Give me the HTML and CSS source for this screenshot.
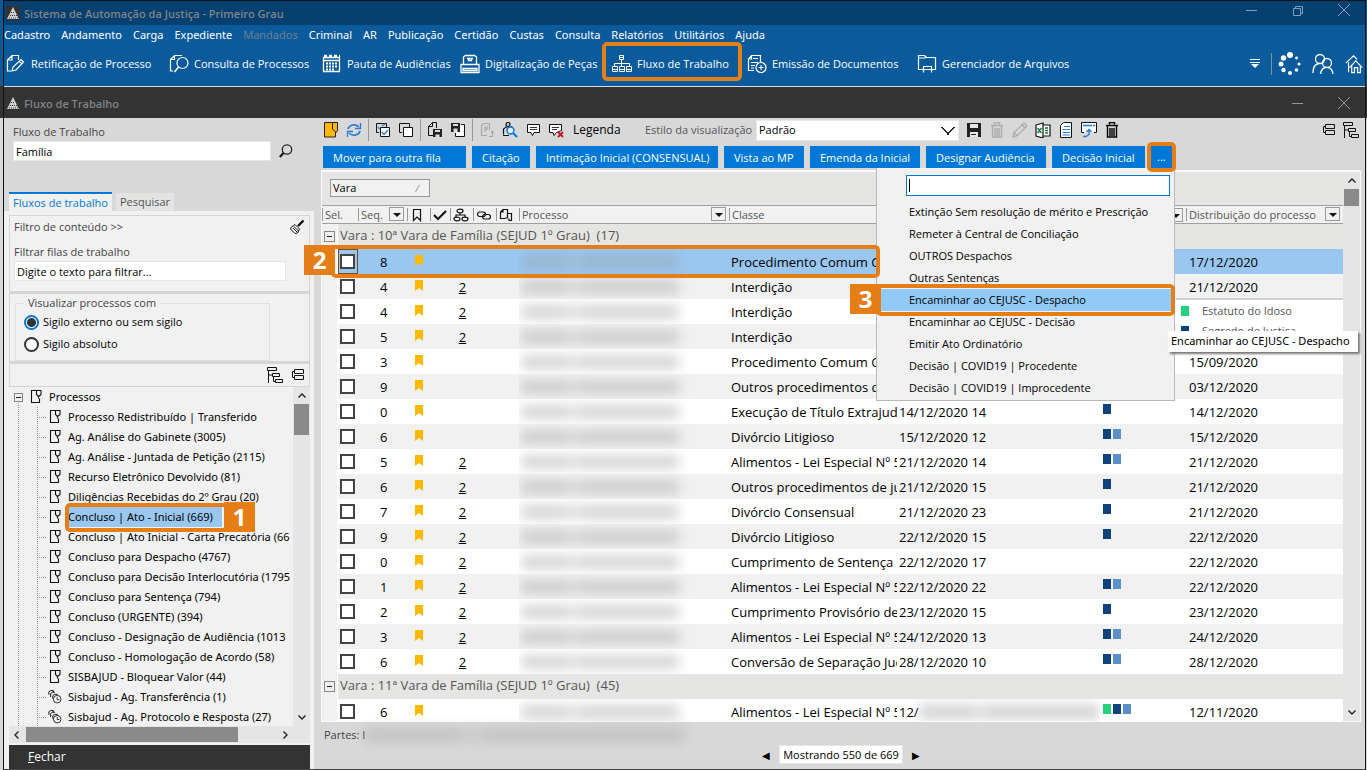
FILE: index.html
```html
<!DOCTYPE html>
<html lang="pt-BR">
<head>
<meta charset="utf-8">
<title>Sistema de Automação da Justiça - Primeiro Grau</title>
<link rel="stylesheet" href="styles.css">
</head>
<body>
<svg class="defs" aria-hidden="true">
  <symbol id="logo" viewBox="0 0 14 14"><path d="M0 0h14v14H0z" fill="#333"/><path d="M7 1 13 13H1z" fill="#d0d0d0"/><path d="M5 6.500h4M4 9.500h7M3 12h9" stroke="#333" stroke-width="1" stroke-dasharray="1 1" fill="none"/></symbol>
  <symbol id="min" viewBox="0 0 14 14"><path d="M1 7.5h11" stroke="currentColor" fill="none"/></symbol>
  <symbol id="max" viewBox="0 0 14 14"><path d="M2.5 5.5h7v7h-7zM4.500 5V3.500h7v7H10" stroke="currentColor" fill="none"/></symbol>
  <symbol id="close" viewBox="0 0 14 14"><path d="m1 1 12 12M13 1 1 13" stroke="currentColor" fill="none"/></symbol>
  <symbol id="docpen" viewBox="0 0 20 20"><path d="M5 17H1.500V6L6 1.500h6.500V6M6 1.500V6H1.500M6 17l1-4 8-7.500 2.500 2.500L10 16zM13 7l3 3" stroke="currentColor" fill="none" stroke-width="1.200"/></symbol>
  <symbol id="docfind" viewBox="0 0 20 20"><path d="M4 17H1.500V5.500l4-4H13M5.500 1.500v4h-4" stroke="currentColor" fill="none" stroke-width="1.200"/><circle cx="13.500" cy="9" r="5.500" stroke="currentColor" fill="none" stroke-width="1.200"/><path d="m9.500 13-4 5" stroke="currentColor" stroke-width="1.500"/></symbol>
  <symbol id="calendar" viewBox="0 0 20 20"><path d="M1.500 3.500h16v14h-16zM1 6.500h17" stroke="currentColor" fill="none" stroke-width="1.300"/><path d="M2 2h16" stroke="currentColor" stroke-width="2.500" stroke-dasharray="3 2"/><path d="M4 9.500h11M4 12.500h11M4 15.500h8" stroke="currentColor" stroke-width="2" stroke-dasharray="2 1"/></symbol>
  <symbol id="scanner" viewBox="0 0 20 20"><path d="M3.500 10V3l2-1.500h9l2 1.500v7M1 10.500h18v8H1zM3 14.500h14v2H3zM7 4.500h6M8.500 4.500v2h3v-2" stroke="currentColor" fill="none" stroke-width="1.300"/></symbol>
  <symbol id="flow" viewBox="0 0 20 20"><path d="M7.500 1.500h4v4h-4zM9.500 6v7M2.500 12V9.500h15V12M.5 12.500h5v5h-5zM7.500 12.500h5v5h-5zM14.500 12.500h5v5h-5zM0 15.500h6M7 15.500h6M14 15.500h6M7 3.500h5" stroke="currentColor" fill="none"/></symbol>
  <symbol id="docadd" viewBox="0 0 20 20"><path d="M7 16.500H1.500V5l3-3.500h9V8M4.500 1.500V5h-3M4 8.500h7M4 11.500h4M4 14h3M6 4.500h5" stroke="currentColor" fill="none" stroke-width="1.200"/><circle cx="14" cy="13.500" r="5" stroke="currentColor" fill="none" stroke-width="1.200"/><path d="M11.500 13.500h5M14 11v5" stroke="currentColor"/></symbol>
  <symbol id="folderdoc" viewBox="0 0 20 20"><path d="M6 15.500H1.500v-14h6l2 2h9v12H15M1.500 4h6l2-.5M6.500 18.500v-6h8v6M6.500 15.500h8" stroke="currentColor" fill="none" stroke-width="1.200"/></symbol>
  <symbol id="more" viewBox="0 0 12 12"><path d="M1 1.500h10M1 4.500h10" stroke="currentColor"/><path d="M2 6h8L6 10z" fill="currentColor"/></symbol>
  <symbol id="spinner" viewBox="0 0 24 24"><g fill="currentColor"><circle cx="12" cy="3" r="3"/><circle cx="5.500" cy="6" r="2.700"/><circle cx="3" cy="12" r="2.500"/><circle cx="5.500" cy="18" r="2.200"/><circle cx="12" cy="21" r="2"/><circle cx="18.500" cy="18" r="1.800"/><circle cx="21" cy="12" r="1.600"/><circle cx="18.500" cy="6" r="1.400"/></g></symbol>
  <symbol id="users" viewBox="0 0 22 22"><g stroke="currentColor" fill="none" stroke-width="1.300"><circle cx="8" cy="6" r="4.500"/><circle cx="15" cy="10" r="4.500"/><path d="M1 20c0-6 2-9 6-9.500M8.500 21c.5-4 2.500-6 5-6.500M16 14.500c3 .5 4.500 3 5 6.500"/></g></symbol>
  <symbol id="home" viewBox="0 0 20 22"><path d="M1 10 9.500 2l4 4M4 9v11M5 15l7-7.500L19 15M7.500 13v7.500h3V15h3.500v5.500h3V13" stroke="currentColor" fill="none" stroke-width="1.300"/></symbol>
  <symbol id="search" viewBox="0 0 16 16"><circle cx="9" cy="6.500" r="4.700" stroke="#222" fill="none" stroke-width="1.300"/><path d="m5.500 10-3.700 4" stroke="#111" stroke-width="2"/></symbol>
  <symbol id="broom" viewBox="0 0 16 16"><path d="m9 7 5.500-5.500" stroke="#111" stroke-width="2.400"/><path d="M6 5.500 10.500 10l-2 4-2.500.5L1.500 10 2 8.500zM4 9l4 4M5 7.500l4.500 4.500" fill="#fff" stroke="#111"/></symbol>
  <symbol id="tree" viewBox="0 0 16 16"><path d="M.5 .5h9v3h-9zM5.500 6.500h7v3h-7zM8.500 12.500h7v3h-7zM1.500 4v12M6.500 10v4.500H8M1.500 8H5" stroke="#111" fill="none"/></symbol>
  <symbol id="boxes" viewBox="0 0 14 14"><path d="M3.500 1.500h9v4h-9zM3.500 7.500h9v4h-9zM3 3.500H1.500v6H3" stroke="#111" fill="none"/></symbol>
  <symbol id="queue" viewBox="0 0 12 14"><path d="M6.500 .5h-5v12h8v-4M6.500 .5h4.500v4l-2.500 2v2M6.500 .5v4l2 2" stroke="#111" fill="none" stroke-width="1.100"/></symbol>
  <symbol id="queues" viewBox="0 0 16 16"><path d="M1 5.500V2l2-1.500h3V3M3 8V4l2-1.500h3M5.500 10V6.500l2-1.500H11" stroke="#111" fill="none" stroke-width="1.100"/><circle cx="10.500" cy="10.500" r="4.300" fill="#fff" stroke="#111"/><path d="M10.500 8v3H13" stroke="#111" fill="none"/></symbol>
  <symbol id="folder" viewBox="0 0 16 16"><path d="M1.500 .5h13v8.500l-2 2v4h-11z" fill="#ffb900" stroke="#222"/><path d="M9.500 1v6l3 3V15" stroke="#222" fill="none"/></symbol>
  <symbol id="refresh" viewBox="0 0 16 16"><path d="M2 7c1-4 7-6 11-2M14 9c-1 4-7 6-11 2" stroke="#2b7cd3" fill="none" stroke-width="1.700"/><path d="M14.500 1v5.500H9M1.500 15V9.500H7" stroke="#2b7cd3" fill="none" stroke-width="1.300"/></symbol>
  <symbol id="checkall" viewBox="0 0 16 16"><path d="M4 10.500H1.500v-9h10V5" stroke="#111" fill="none"/><path d="M5.500 5.500h9v9h-9z" fill="#fff" stroke="#111"/><path d="m7 10 2 2.500L13 8M3 5l1.500 2M7 4l3-2" stroke="#2b7cd3" fill="none" stroke-width="1.300"/></symbol>
  <symbol id="uncheck" viewBox="0 0 16 16"><path d="M4 10.500H1.500v-9h10V5" stroke="#111" fill="none"/><path d="M5.500 5.500h9v9h-9z" fill="#fff" stroke="#111"/></symbol>
  <symbol id="docsave" viewBox="0 0 16 16"><path d="M6 13.500H1.500v-9l4-4h4V6M5.500 .5v4h-4" stroke="#111" fill="none"/><path d="M6 7h9v8H6z" fill="#222"/><path d="M8 8h5v2H8zM8.500 12.500h4V15h-4z" fill="#ddd"/></symbol>
  <symbol id="savedoc" viewBox="0 0 16 16"><path d="M11 2.500h3.500v12h-9V11" stroke="#111" fill="#fff"/><path d="M1 1h9v9H1z" fill="#222"/><path d="M3 2h5v2H3zM3.500 6.500h4V10h-4z" fill="#ddd"/></symbol>
  <symbol id="docp" viewBox="0 0 16 16"><path d="M8 13.500H2.500v-10l2-2h6V8M10 14.500h3.500v-5M12 11l1.500-2 1.500 2M6 10V5h2v2.500H6" stroke="#aaa" fill="none" stroke-width="1.200"/></symbol>
  <symbol id="stampfind" viewBox="0 0 16 16"><path d="M1.500 12.500V7L4 5h6l1 2" stroke="#111" fill="none" stroke-width="1.200"/><circle cx="6" cy="2.500" r="2" stroke="#111" fill="none" stroke-width="1.200"/><path d="M1 13.500h6" stroke="#111"/><circle cx="8.500" cy="8.500" r="3.500" fill="#e5effa" stroke="#0078d7" stroke-width="1.400"/><path d="m11 11 4 4" stroke="#0078d7" stroke-width="2"/></symbol>
  <symbol id="comment" viewBox="0 0 16 16"><path d="M2.500 2.500h12v8H9L7.500 13.500 6 10.500H2.500z" stroke="#111" fill="#fff"/><path d="M5 5.500h7M5 7.500h7" stroke="#333"/></symbol>
  <symbol id="commentx" viewBox="0 0 16 16"><path d="M1.500 2.500h12v6l-5 2L6 13.500 5 10.500H1.500z" stroke="#111" fill="#fff"/><path d="M4 5.500h7M4 7.500h5" stroke="#333"/><path d="m10 10 5 5M15 10l-5 5" stroke="#c4151c" stroke-width="1.800"/></symbol>
  <symbol id="save" viewBox="0 0 16 16"><path d="M1 1h14v14H1z" fill="#222"/><path d="M4 2h8v4H4zM4 10h8v5H4z" fill="#e5e5e5"/><path d="M5 12.500h5" stroke="#222"/></symbol>
  <symbol id="bin" viewBox="0 0 16 16"><path d="M5.500 2.500v-2h5v2M2 3.500h12M3.500 4v11h9V4M6 6v8M8 6v8M10 6v8" stroke="currentColor" fill="none" stroke-width="1.400"/></symbol>
  <symbol id="pencil" viewBox="0 0 16 16"><path d="m1 15 1-4.500L12 1l3 3-9.500 9.500zM10 3l3 3M2 10.500 5.500 14" stroke="#aaa" fill="none" stroke-width="1.200"/></symbol>
  <symbol id="excel" viewBox="0 0 16 16"><path d="M8 3h7v11H8" fill="#fff" stroke="#111" stroke-width="1.200"/><path d="m1 3 7-2v15l-7-2z" fill="#fff" stroke="#111" stroke-width="1.200"/><path d="m2.500 6 4 5M6.500 6l-4 5M10 6h3M10 8.500h3M10 11h3" stroke="#107c41" stroke-width="1.400"/></symbol>
  <symbol id="list" viewBox="0 0 16 16"><path d="M2.500 3.500 5.500 .5h8v15h-11z" fill="#fff" stroke="#111"/><path d="M6 4.500h6M4.500 7.500H12M4.500 10.500H12M4.500 13H12" stroke="#2b7cd3"/></symbol>
  <symbol id="window" viewBox="0 0 16 16"><path d="M3 10.500H.5v-10h15v10H13" fill="#fff" stroke="#111"/><path d="M2 3.500h12" stroke="#2b7cd3" stroke-width="1.500" stroke-dasharray="9 1"/><path d="M2 14.500h3l3-2V8M5.500 10 8 7.500l2.500 2.500" stroke="#2b7cd3" fill="none" stroke-width="1.400"/></symbol>
  <symbol id="mark" viewBox="0 0 14 14"><path d="M3.500 1.500h7v11L7 9l-3.500 3.500z" stroke="#111" fill="none" stroke-width="1.200"/></symbol>
  <symbol id="tick" viewBox="0 0 14 14"><path d="m1 7 4 4 8-8" stroke="#111" fill="none" stroke-width="2"/></symbol>
  <symbol id="nodes" viewBox="0 0 16 14"><g stroke="#111" fill="none" stroke-width="1.200"><ellipse cx="7" cy="3" rx="3" ry="1.800"/><ellipse cx="4" cy="11" rx="3" ry="1.800"/><ellipse cx="12" cy="11" rx="3" ry="1.800"/><path d="M7 5v2M3 9V7h9v2"/></g></symbol>
  <symbol id="link" viewBox="0 0 16 14"><g stroke="#111" fill="none" stroke-width="1.200"><rect x="1.500" y="4" width="8" height="4.500" rx="2.200"/><rect x="6.500" y="6.500" width="8" height="4.500" rx="2.200"/></g></symbol>
  <symbol id="docs" viewBox="0 0 14 14"><path d="M6 10.500H1.500V4l2.500-2.500h4.500V10H6M9 5.500h3.500v7H10v-2M4 1.500V4H1.500" stroke="#111" fill="none" stroke-width="1.200"/></symbol>
  <symbol id="down" viewBox="0 0 14 14"><path d="M3 5h8L7 9z" fill="#111"/></symbol>
  <symbol id="flag" viewBox="0 0 8 11"><path d="M0 0h8v11L4 8l-4 3z" fill="#ffb900"/></symbol>
  <symbol id="up-c" viewBox="0 0 10 10"><path d="m1.500 6.500 3.500-3.500 3.500 3.500" stroke="#222" fill="none" stroke-width="1.400"/></symbol>
  <symbol id="down-c" viewBox="0 0 10 10"><path d="m1.500 3.500 3.500 3.500 3.500-3.500" stroke="#222" fill="none" stroke-width="1.400"/></symbol>
  <symbol id="left-c" viewBox="0 0 10 10"><path d="M6.500 1.500 3 5l3.500 3.500" stroke="#222" fill="none" stroke-width="1.400"/></symbol>
  <symbol id="right-c" viewBox="0 0 10 10"><path d="M3.500 1.500 7 5 3.500 8.500" stroke="#222" fill="none" stroke-width="1.400"/></symbol>
</svg>

<div class="app">
  <header class="titlebar">
    <svg class="i14"><use href="#logo"/></svg>
    <h1>Sistema de Automação da Justiça - Primeiro Grau</h1>
    <div class="winctl">
      <button aria-label="Minimizar"><svg class="i14"><use href="#min"/></svg></button>
      <button aria-label="Restaurar"><svg class="i14"><use href="#max"/></svg></button>
      <button aria-label="Fechar janela"><svg class="i14"><use href="#close"/></svg></button>
    </div>
  </header>
  <nav class="menubar">
    <button>Cadastro</button><button>Andamento</button><button>Carga</button><button>Expediente</button><button disabled>Mandados</button><button>Criminal</button><button>AR</button><button>Publicação</button><button>Certidão</button><button>Custas</button><button>Consulta</button><button>Relatórios</button><button>Utilitários</button><button>Ajuda</button>
  </nav>
  <div class="ribbon">
    <button class="w163"><svg class="i20"><use href="#docpen"/></svg>Retificação de Processo</button>
    <button class="w153"><svg class="i20"><use href="#docfind"/></svg>Consulta de Processos</button>
    <button class="w138"><svg class="i20"><use href="#calendar"/></svg>Pauta de Audiências</button>
    <button class="w152"><svg class="i20"><use href="#scanner"/></svg>Digitalização de Peças</button>
    <button class="w135 target"><svg class="i20"><use href="#flow"/></svg>Fluxo de Trabalho<span class="ring ring-flow"></span></button>
    <button class="w170"><svg class="i20"><use href="#docadd"/></svg>Emissão de Documentos</button>
    <button><svg class="i20"><use href="#folderdoc"/></svg>Gerenciador de Arquivos</button>
    <div class="ribbon-end">
      <button aria-label="Mais"><svg class="i12"><use href="#more"/></svg></button>
      <span class="bar"></span>
      <svg class="i24"><use href="#spinner"/></svg>
      <button aria-label="Usuários"><svg class="i22"><use href="#users"/></svg></button>
      <button aria-label="Início"><svg class="i20"><use href="#home"/></svg></button>
    </div>
  </div>
  <header class="subtitle">
    <svg class="i14"><use href="#logo"/></svg>
    <h2>Fluxo de Trabalho</h2>
    <div class="winctl">
      <button aria-label="Minimizar painel"><svg class="i14"><use href="#min"/></svg></button>
      <button aria-label="Fechar painel"><svg class="i14"><use href="#close"/></svg></button>
    </div>
  </header>

  <main class="main">
    <aside class="side">
      <div class="finder">
        <label for="fluxo">Fluxo de Trabalho</label>
        <div class="finder-row"><input class="field" id="fluxo" value="Família"><button aria-label="Buscar"><svg class="i16"><use href="#search"/></svg></button></div>
      </div>
      <div class="tabs"><button class="tab on">Fluxos de trabalho</button><button class="tab">Pesquisar</button></div>
      <div class="sidebody">
        <section class="box filter">
          <div class="filter-head"><span>Filtro de conteúdo &gt;&gt;</span><button aria-label="Limpar"><svg class="i16"><use href="#broom"/></svg></button></div>
          <label for="filas">Filtrar filas de trabalho</label>
          <input class="field" id="filas" value="Digite o texto para filtrar...">
        </section>
        <section class="box secrecy">
          <fieldset><legend>Visualizar processos com</legend>
            <label><input type="radio" name="sigilo" checked>Sigilo externo ou sem sigilo</label>
            <label><input type="radio" name="sigilo">Sigilo absoluto</label>
          </fieldset>
        </section>
        <div class="box treebar"><button aria-label="Expandir"><svg class="i16"><use href="#tree"/></svg></button><button aria-label="Recolher"><svg class="i14"><use href="#boxes"/></svg></button></div>
        <div class="treewrap">
          <ul class="tree">
            <li class="root"><span class="pm"></span><svg class="q"><use href="#queue"/></svg>Processos</li>
            <li><svg class="q"><use href="#queue"/></svg>Processo Redistribuído | Transferido</li>
            <li><svg class="q"><use href="#queue"/></svg>Ag. Análise do Gabinete (3005)</li>
            <li><svg class="q"><use href="#queue"/></svg>Ag. Análise - Juntada de Petição (2115)</li>
            <li><svg class="q"><use href="#queue"/></svg>Recurso Eletrônico Devolvido (81)</li>
            <li><svg class="q"><use href="#queue"/></svg>Diligências Recebidas do 2º Grau (20)</li>
            <li class="picked"><svg class="q"><use href="#queue"/></svg><span class="target"><span class="sel">Concluso | Ato - Inicial (669)</span><span class="ring ring-queue"></span><b class="badge badge-1">1</b></span></li>
            <li><svg class="q"><use href="#queue"/></svg>Concluso | Ato Inicial - Carta Precatória (66</li>
            <li><svg class="q"><use href="#queue"/></svg>Concluso para Despacho (4767)</li>
            <li><svg class="q"><use href="#queue"/></svg>Concluso para Decisão Interlocutória (1795</li>
            <li><svg class="q"><use href="#queue"/></svg>Concluso para Sentença (794)</li>
            <li><svg class="q"><use href="#queue"/></svg>Concluso (URGENTE) (394)</li>
            <li><svg class="q"><use href="#queue"/></svg>Concluso - Designação de Audiência (1013</li>
            <li><svg class="q"><use href="#queue"/></svg>Concluso - Homologação de Acordo (58)</li>
            <li><svg class="q"><use href="#queue"/></svg>SISBAJUD - Bloquear Valor (44)</li>
            <li><svg class="q"><use href="#queues"/></svg>Sisbajud - Ag. Transferência (1)</li>
            <li><svg class="q"><use href="#queues"/></svg>Sisbajud - Ag. Protocolo e Resposta (27)</li>
          </ul>
          <div class="vbar"><svg class="i10"><use href="#up-c"/></svg><span class="thumb t30"></span><svg class="i10 last"><use href="#down-c"/></svg></div>
        </div>
        <div class="hbar"><svg class="i10"><use href="#left-c"/></svg><span class="thumb wide"></span><svg class="i10"><use href="#right-c"/></svg></div>
        <button class="closebar"><u>F</u>echar</button>
      </div>
    </aside>

    <section class="work">
      <div class="tools">
        <button aria-label="Fila"><svg class="i16"><use href="#folder"/></svg></button>
        <button aria-label="Atualizar"><svg class="i16"><use href="#refresh"/></svg></button>
        <span class="sep"></span>
        <button aria-label="Marcar todos"><svg class="i16"><use href="#checkall"/></svg></button>
        <button aria-label="Desmarcar"><svg class="i16"><use href="#uncheck"/></svg></button>
        <span class="sep"></span>
        <button aria-label="Exportar"><svg class="i16"><use href="#docsave"/></svg></button>
        <button aria-label="Importar"><svg class="i16"><use href="#savedoc"/></svg></button>
        <span class="sep"></span>
        <button aria-label="Peça" disabled><svg class="i16"><use href="#docp"/></svg></button>
        <button aria-label="Localizar"><svg class="i16"><use href="#stampfind"/></svg></button>
        <button aria-label="Comentar"><svg class="i16"><use href="#comment"/></svg></button>
        <button aria-label="Excluir comentário"><svg class="i16"><use href="#commentx"/></svg></button>
        <button class="legend-btn">Legenda</button>
        <div class="style-pick"><label for="estilo">Estilo da visualização</label><select id="estilo"><option>Padrão</option></select></div>
        <button aria-label="Salvar"><svg class="i16"><use href="#save"/></svg></button>
        <button aria-label="Excluir estilo" class="dim" disabled><svg class="i16"><use href="#bin"/></svg></button>
        <button aria-label="Editar" disabled><svg class="i16"><use href="#pencil"/></svg></button>
        <button aria-label="Planilha"><svg class="i16"><use href="#excel"/></svg></button>
        <button aria-label="Relatório"><svg class="i16"><use href="#list"/></svg></button>
        <button aria-label="Enviar"><svg class="i16"><use href="#window"/></svg></button>
        <button aria-label="Excluir"><svg class="i16"><use href="#bin"/></svg></button>
        <button class="push" aria-label="Recolher grupos"><svg class="i14"><use href="#boxes"/></svg></button>
        <button aria-label="Expandir grupos"><svg class="i16"><use href="#tree"/></svg></button>
      </div>
      <div class="actions">
        <button class="w143">Mover para outra fila</button>
        <button class="w58">Citação</button>
        <button class="w182">Intimação Inicial (CONSENSUAL)</button>
        <button class="w80">Vista ao MP</button>
        <button class="w110">Emenda da Inicial</button>
        <button class="w120">Designar Audiência</button>
        <button class="w93">Decisão Inicial</button>
        <div class="overflow">
          <button class="w21">...</button>
          <span class="ring ring-more"></span>
          <div class="popup">
            <input aria-label="Pesquisar atividade">
            <span class="caret"></span>
            <ul>
              <li><button>Extinção Sem resolução de mérito e Prescrição</button></li>
              <li><button>Remeter à Central de Conciliação</button></li>
              <li><button>OUTROS Despachos</button></li>
              <li><button>Outras Sentenças</button></li>
              <li class="hot"><button>Encaminhar ao CEJUSC - Despacho</button><span class="ring ring-item"></span><b class="badge badge-3">3</b><span class="tip" role="tooltip">Encaminhar ao CEJUSC - Despacho</span></li>
              <li><button>Encaminhar ao CEJUSC - Decisão</button></li>
              <li><button>Emitir Ato Ordinatório</button></li>
              <li><button>Decisão | COVID19 | Procedente</button></li>
              <li><button>Decisão | COVID19 | Improcedente</button></li>
            </ul>
          </div>
        </div>
      </div>

      <div class="gridbox">
        <div class="gridmain">
          <div class="groupby"><button>Vara<i>∕</i></button></div>
          <table>
            <colgroup><col class="c16"><col class="c20"><col class="c49"><col class="c23"><col class="c20"><col class="c23"><col class="c23"><col class="c23"><col class="c210"><col class="c168"><col class="c203"><col class="c86"><col></colgroup>
            <thead><tr>
              <th colspan="2">Sel.</th><th><div>Seq.<button aria-label="Filtrar Seq."><svg class="i14"><use href="#down"/></svg></button></div></th>
              <th><svg class="i14"><use href="#mark"/></svg></th><th><svg class="i14"><use href="#tick"/></svg></th><th><svg class="i16"><use href="#nodes"/></svg></th><th><svg class="i16"><use href="#link"/></svg></th><th><svg class="i14"><use href="#docs"/></svg></th>
              <th><div>Processo<button aria-label="Filtrar Processo"><svg class="i14"><use href="#down"/></svg></button></div></th><th>Classe</th><th></th><th><div><span></span><button aria-label="Filtrar"><svg class="i14"><use href="#down"/></svg></button></div></th>
              <th><div>Distribuição do processo<button aria-label="Filtrar Distribuição"><svg class="i14"><use href="#down"/></svg></button></div></th>
            </tr></thead>
            <tbody>
              <tr class="grp"><td class="ind"><span class="pm"></span></td><td colspan="12">Vara : 10ª Vara de Família (SEJUD 1º Grau)&nbsp; (17)</td></tr>
              <tr class="blue"><td class="ind"></td><td class="focus"><input type="checkbox" aria-label="Selecionar"><span class="ring ring-row"></span><b class="badge badge-2">2</b></td><td class="n">8</td><td><svg class="fl"><use href="#flag"/></svg></td><td></td><td></td><td></td><td></td><td><span class="smudge"></span></td><td>Procedimento Comum Cí</td><td></td><td></td><td class="d">17/12/2020</td></tr>
              <tr class="alt"><td class="ind"></td><td><input type="checkbox" aria-label="Selecionar"></td><td class="n">4</td><td><svg class="fl"><use href="#flag"/></svg></td><td></td><td class="k"><a href="#">2</a></td><td></td><td></td><td><span class="smudge"></span></td><td>Interdição</td><td></td><td></td><td class="d">21/12/2020</td></tr>
              <tr><td class="ind"></td><td><input type="checkbox" aria-label="Selecionar"></td><td class="n">4</td><td><svg class="fl"><use href="#flag"/></svg></td><td></td><td class="k"><a href="#">2</a></td><td></td><td></td><td><span class="smudge"></span></td><td>Interdição</td><td></td><td></td><td class="d legend-cell"><div class="legend"><p><i class="g"></i>Estatuto do Idoso</p><p><i class="n1"></i>Segredo de Justiça</p></div></td></tr>
              <tr class="alt"><td class="ind"></td><td><input type="checkbox" aria-label="Selecionar"></td><td class="n">5</td><td><svg class="fl"><use href="#flag"/></svg></td><td></td><td class="k"><a href="#">2</a></td><td></td><td></td><td><span class="smudge"></span></td><td>Interdição</td><td></td><td></td><td class="d"></td></tr>
              <tr><td class="ind"></td><td><input type="checkbox" aria-label="Selecionar"></td><td class="n">3</td><td><svg class="fl"><use href="#flag"/></svg></td><td></td><td></td><td></td><td></td><td><span class="smudge"></span></td><td>Procedimento Comum Cí</td><td></td><td></td><td class="d">15/09/2020</td></tr>
              <tr class="alt"><td class="ind"></td><td><input type="checkbox" aria-label="Selecionar"></td><td class="n">9</td><td><svg class="fl"><use href="#flag"/></svg></td><td></td><td></td><td></td><td></td><td><span class="smudge"></span></td><td>Outros procedimentos d</td><td></td><td></td><td class="d">03/12/2020</td></tr>
              <tr><td class="ind"></td><td><input type="checkbox" aria-label="Selecionar"></td><td class="n">0</td><td><svg class="fl"><use href="#flag"/></svg></td><td></td><td></td><td></td><td></td><td><span class="smudge"></span></td><td>Execução de Título Extrajudi</td><td class="t">14/12/2020 14</td><td class="f"><i class="n1"></i></td><td class="d">14/12/2020</td></tr>
              <tr class="alt"><td class="ind"></td><td><input type="checkbox" aria-label="Selecionar"></td><td class="n">6</td><td><svg class="fl"><use href="#flag"/></svg></td><td></td><td></td><td></td><td></td><td><span class="smudge"></span></td><td>Divórcio Litigioso</td><td class="t">15/12/2020 12</td><td class="f"><i class="n1"></i><i class="n2"></i></td><td class="d">15/12/2020</td></tr>
              <tr><td class="ind"></td><td><input type="checkbox" aria-label="Selecionar"></td><td class="n">5</td><td><svg class="fl"><use href="#flag"/></svg></td><td></td><td class="k"><a href="#">2</a></td><td></td><td></td><td><span class="smudge"></span></td><td>Alimentos - Lei Especial Nº 5</td><td class="t">21/12/2020 14</td><td class="f"><i class="n1"></i><i class="n2"></i></td><td class="d">21/12/2020</td></tr>
              <tr class="alt"><td class="ind"></td><td><input type="checkbox" aria-label="Selecionar"></td><td class="n">6</td><td><svg class="fl"><use href="#flag"/></svg></td><td></td><td class="k"><a href="#">2</a></td><td></td><td></td><td><span class="smudge"></span></td><td>Outros procedimentos de ju</td><td class="t">21/12/2020 15</td><td class="f"><i class="n1"></i></td><td class="d">21/12/2020</td></tr>
              <tr><td class="ind"></td><td><input type="checkbox" aria-label="Selecionar"></td><td class="n">7</td><td><svg class="fl"><use href="#flag"/></svg></td><td></td><td class="k"><a href="#">2</a></td><td></td><td></td><td><span class="smudge"></span></td><td>Divórcio Consensual</td><td class="t">21/12/2020 23</td><td class="f"><i class="n1"></i></td><td class="d">21/12/2020</td></tr>
              <tr class="alt"><td class="ind"></td><td><input type="checkbox" aria-label="Selecionar"></td><td class="n">9</td><td><svg class="fl"><use href="#flag"/></svg></td><td></td><td class="k"><a href="#">2</a></td><td></td><td></td><td><span class="smudge"></span></td><td>Divórcio Litigioso</td><td class="t">22/12/2020 15</td><td class="f"><i class="n1"></i></td><td class="d">22/12/2020</td></tr>
              <tr><td class="ind"></td><td><input type="checkbox" aria-label="Selecionar"></td><td class="n">0</td><td><svg class="fl"><use href="#flag"/></svg></td><td></td><td class="k"><a href="#">2</a></td><td></td><td></td><td><span class="smudge"></span></td><td>Cumprimento de Sentença d</td><td class="t">22/12/2020 17</td><td class="f"></td><td class="d">22/12/2020</td></tr>
              <tr class="alt"><td class="ind"></td><td><input type="checkbox" aria-label="Selecionar"></td><td class="n">1</td><td><svg class="fl"><use href="#flag"/></svg></td><td></td><td class="k"><a href="#">2</a></td><td></td><td></td><td><span class="smudge"></span></td><td>Alimentos - Lei Especial Nº 5</td><td class="t">22/12/2020 22</td><td class="f"><i class="n1"></i><i class="n2"></i></td><td class="d">22/12/2020</td></tr>
              <tr><td class="ind"></td><td><input type="checkbox" aria-label="Selecionar"></td><td class="n">2</td><td><svg class="fl"><use href="#flag"/></svg></td><td></td><td class="k"><a href="#">2</a></td><td></td><td></td><td><span class="smudge"></span></td><td>Cumprimento Provisório de</td><td class="t">23/12/2020 15</td><td class="f"><i class="n1"></i></td><td class="d">23/12/2020</td></tr>
              <tr class="alt"><td class="ind"></td><td><input type="checkbox" aria-label="Selecionar"></td><td class="n">3</td><td><svg class="fl"><use href="#flag"/></svg></td><td></td><td class="k"><a href="#">2</a></td><td></td><td></td><td><span class="smudge"></span></td><td>Alimentos - Lei Especial Nº 5</td><td class="t">24/12/2020 13</td><td class="f"><i class="n1"></i><i class="n2"></i></td><td class="d">24/12/2020</td></tr>
              <tr><td class="ind"></td><td><input type="checkbox" aria-label="Selecionar"></td><td class="n">6</td><td><svg class="fl"><use href="#flag"/></svg></td><td></td><td class="k"><a href="#">2</a></td><td></td><td></td><td><span class="smudge"></span></td><td>Conversão de Separação Jud</td><td class="t">28/12/2020 10</td><td class="f"><i class="n1"></i><i class="n2"></i></td><td class="d">28/12/2020</td></tr>
              <tr class="grp"><td class="ind"><span class="pm"></span></td><td colspan="12">Vara : 11ª Vara de Família (SEJUD 1º Grau)&nbsp; (45)</td></tr>
              <tr><td class="ind"></td><td><input type="checkbox" aria-label="Selecionar"></td><td class="n">6</td><td><svg class="fl"><use href="#flag"/></svg></td><td></td><td></td><td></td><td></td><td><span class="smudge"></span></td><td>Alimentos - Lei Especial Nº 5</td><td class="t"><div class="part">12/<span class="smudge long"></span></div></td><td class="f"><i class="g"></i><i class="n1"></i><i class="n2"></i></td><td class="d">12/11/2020</td></tr>
            </tbody>
          </table>
        </div>
        <div class="vbar"><svg class="i10"><use href="#up-c"/></svg><span class="thumb t16"></span><svg class="i10 last"><use href="#down-c"/></svg></div>
      </div>
      <div class="parties">Partes: I<span class="smudge wideband"></span></div>
      <div class="pager"><button>◀</button><output>Mostrando 550 de 669</output><button>▶</button></div>
    </section>
  </main>
</div>
</body>
</html>
```
FILE: styles.css
```css
* { box-sizing: border-box; }
body { margin: 0; background: linear-gradient(#0b5a9c 0 86px, #333 86px 118px, #d8d8d8 118px); font: 11px/16px "Open Sans", "Noto Sans", sans-serif; color: #000; overflow: hidden; }
button, input, select { font: inherit; color: inherit; margin: 0; }
button { background: none; border: 0; padding: 0; text-align: left; white-space: nowrap; }
ul, h1, h2, p { margin: 0; padding: 0; list-style: none; }
svg { display: block; flex: none; }
.defs { position: absolute; width: 0; height: 0; }
.i10 { width: 10px; height: 10px; }
.i12 { width: 12px; height: 12px; }
.i14 { width: 14px; height: 14px; }
.i16 { width: 16px; height: 16px; }
.i20 { width: 20px; height: 20px; }
.i22 { width: 22px; height: 22px; }
.i24 { width: 24px; height: 24px; }

.app { display: flex; flex-direction: column; min-height: 100vh; margin: 0 1px 0 3px; border: solid #111; border-width: 1px 1px 3px; border-bottom-color: #444; }
.titlebar { display: flex; align-items: center; gap: 4px; height: 24px; padding: 0 14px 0 2px; background: #054070; color: #7b9fbd; }
.titlebar h1, .subtitle h2 { font-size: 11px; font-weight: 600; color: #808386; padding-top: 2px; }
.winctl { display: flex; gap: 32px; margin-left: auto; }
.titlebar .winctl { padding-bottom: 6px; }
.menubar { display: flex; gap: 11px; height: 20px; background: #0b5a9c; color: #fff; }
.menubar button { font-family: "Noto Sans", sans-serif; }
.menubar button:disabled { color: #6b7f92; }
.ribbon { display: flex; align-items: center; height: 42px; padding: 0 1px 4px 2px; background: #0b5a9c; color: #fff; border-bottom: 1px solid #ddd; }
.ribbon > button { display: flex; align-items: center; gap: 5px; }
.ribbon-end { display: flex; align-items: center; gap: 10px; margin-left: auto; }
.bar { width: 1px; height: 22px; background: #8a8f94; margin-right: -4px; }
.subtitle { display: flex; align-items: center; gap: 4px; height: 31px; padding: 0 14px 0 2px; background: #333; color: #999; }
.w163 { width: 163px; } .w153 { width: 153px; } .w138 { width: 138px; } .w152 { width: 152px; } .w135 { width: 135px; } .w170 { width: 170px; }

.target { position: relative; }
.ring { position: absolute; border: 4px solid #e67e17; border-radius: 5px; z-index: 6; pointer-events: none; }
.ring-flow { inset: -12px 5px -7px -10px; }
.ring-queue { inset: -4px -6px -5px -3px; }
.ring-more { inset: -4px; }
.ring-item { inset: -5px -1px -5px -1px; }
.ring-row { left: -7px; top: -4px; width: 549px; height: 33px; }
.badge { position: absolute; z-index: 7; width: 31px; height: 30px; background: #e67e17; color: #fff; font: bold 24px/30px "Open Sans", sans-serif; text-align: center; }
.badge-1 { left: 156px; top: -5px; }
.badge-2 { left: -34px; top: -4px; }
.badge-3 { left: -27px; top: -5px; }

.main { display: flex; flex: 1; background: #d8d8d8; }
.side { display: flex; flex-direction: column; width: 310px; flex: none; }
.finder { padding: 6px 9px 0; color: #444; }
.finder-row { display: flex; gap: 7px; align-items: center; }
.field { width: 258px; height: 20px; border: 1px solid #e6e6e6; background: #fff; padding: 0 2px; color: #000; }
.finder-row .field { margin-top: 1px; }
.tabs { display: flex; align-items: flex-end; gap: 4px; margin-top: 31px; padding-left: 5px; }
.tab { height: 18px; padding: 0 4px; background: #e3e3e1; color: #555; }
.tab.on { height: 19px; background: #f1f1f1; color: #0078d7; border-top: 2px solid #0078d7; }
.sidebody { flex: 1; display: flex; flex-direction: column; background: #f1f1f1; padding: 4px 4px 0 5px; }
.box { border: 1px solid #d5d5d5; }
.filter { height: 77px; padding: 1px 4px; color: #444; }
.filter-head { display: flex; justify-content: space-between; align-items: center; height: 20px; margin-bottom: 6px; }
.filter label { display: block; line-height: 18px; }
.filter .field { width: 272px; }
.secrecy { border-top-width: 2px; height: 70px; padding: 1px 5px; }
.secrecy fieldset { width: 255px; margin: 0; border: 1px solid #e0e0e0; padding: 0 8px 5px; }
.secrecy legend { padding: 0 4px; color: #444; }
.secrecy label { display: flex; align-items: center; gap: 4px; height: 22px; }
input[type=radio] { appearance: none; width: 15px; height: 15px; border: 2px solid #333; border-radius: 50%; background: #fff; }
input[type=radio]:checked { border-color: #0078d7; background: radial-gradient(#333 0 4px, #fff 5px); }
.treebar { display: flex; justify-content: flex-end; align-items: center; gap: 8px; height: 25px; padding-right: 4px; border-top-width: 2px; }
.treewrap { display: flex; height: 339px; }
.tree { flex: 1; overflow: hidden; background: repeating-linear-gradient(#999 0 1px, transparent 1px 2px) 9px 14px / 1px 100% no-repeat; white-space: nowrap; }
.tree li { display: flex; align-items: center; height: 20px; padding-left: 39px; font-family: "Noto Sans", sans-serif; background: repeating-linear-gradient(#999 0 1px, transparent 1px 2px) 28px 0 / 1px 20px no-repeat, repeating-linear-gradient(90deg, #999 0 1px, transparent 1px 2px) 28px 10px / 9px 1px no-repeat; }
.tree .root { padding-left: 5px; background: none; }
.q { width: 14px; height: 14px; margin-right: 6px; }
.root .q { margin: 0 6px 0 6px; }
.pm { display: block; width: 9px; height: 9px; border: 1px solid #888; background: linear-gradient(#222, #222) center / 5px 1px no-repeat #f1f1f1; }
.sel { background: #99c7f0; line-height: 20px; display: block; width: 154px; }
.vbar { width: 17px; background: #e5e5e5; display: flex; flex-direction: column; align-items: center; flex: none; padding: 4px 0; }
.thumb { background: #8a8a8a; width: 15px; margin-top: 3px; }
.t30 { height: 31px; } .t16 { height: 17px; }
.last { margin-top: auto; }
.hbar { display: flex; align-items: center; justify-content: space-between; height: 17px; padding: 0 20px 0 3px; background: #e5e5e5; }
.hbar .thumb { width: 212px; height: 15px; margin: 0 auto 0 4px; }
.closebar { flex: 1; min-height: 22px; margin-top: 2px; background: #333; color: #fff; padding-left: 19px; font-size: 12px; }

.work { flex: 1; min-width: 0; padding: 1px 4px 0 7px; display: flex; flex-direction: column; }
.tools { display: flex; align-items: center; gap: 7px; height: 22px; padding: 0 2px; }
.sep { width: 1px; height: 22px; background: #999; margin: 0 -1px; }
.legend-btn { margin-left: 2px; width: 65px; font-size: 12px; }
.style-pick { display: flex; align-items: center; color: #555; }
.style-pick label { width: 111px; white-space: nowrap; }
.style-pick select { appearance: none; width: 203px; height: 21px; border: 1px solid #e8e8e8; border-radius: 0; padding: 0 2px; color: #000; background: linear-gradient(45deg, transparent 48%, #222 48% 60%, transparent 60%) 184px 6px / 8px 8px no-repeat, linear-gradient(-45deg, transparent 48%, #222 48% 60%, transparent 60%) 190px 6px / 8px 8px no-repeat, #fff; }
.dim { color: #aaa; }
.push { margin-left: auto; }
.actions { display: flex; gap: 6px; padding: 5px 2px 2px; }
.actions > button, .overflow > button { height: 22px; background: #0078d7; color: #fff; padding: 2px 0 0 10px; flex: none; }
.w143 { width: 143px; } .w58 { width: 58px; } .w182 { width: 182px; } .w80 { width: 80px; } .w110 { width: 110px; } .w120 { width: 120px; } .w93 { width: 93px; } .w21 { width: 21px; }
.overflow { position: relative; }
.overflow > .w21 { padding: 0 6px; }
.popup { position: absolute; z-index: 5; right: -3px; top: 22px; width: 299px; padding: 7px 0 1px; background: #f1f1f1; border: 1px solid #b8b8b8; border-top: 0; }
.popup > input { display: block; width: 264px; height: 21px; margin: 0 0 5px 29px; border: 1px solid #0078d7; background: #fff; }
.caret { position: absolute; left: 32px; top: 11px; width: 1px; height: 13px; background: #000; }
.popup li { position: relative; height: 22px; }
.popup li button { width: 100%; height: 22px; padding-left: 32px; }
.popup .hot { background: #91c9f7; }
.tip { position: absolute; left: 291px; top: 42px; z-index: 8; height: 21px; min-width: 190px; padding: 2px 3px; background: #fff; box-shadow: 2px 2px 2px #777; white-space: nowrap; font-family: "Noto Sans", sans-serif; }

.gridbox { display: flex; height: 552px; border: solid #fafafa; border-width: 2px 1px 1px 1px; overflow-x: visible; overflow-y: clip; }
.gridmain { flex: 1; min-width: 0; background: #fff; }
.groupby { height: 33px; padding: 7px 8px; background: #e5e5e3; }
.groupby button { display: flex; justify-content: space-between; width: 100px; height: 18px; padding: 0 10px 0 2px; border: 1px solid #999; background: #f1f1f1; }
.groupby i { color: #888; font-size: 10px; }
table { width: 100%; table-layout: fixed; border-collapse: separate; border-spacing: 0; }
.c16 { width: 16px; } .c20 { width: 20px; } .c49 { width: 49px; } .c23 { width: 23px; } .c210 { width: 210px; } .c168 { width: 168px; } .c203 { width: 203px; } .c86 { width: 86px; }
th { height: 19px; padding: 0 3px 0 3px; border: solid #a0a0a0; border-width: 1px 0; background: linear-gradient(#999, #999) 0 2px / 1px 13px no-repeat #f1f1f1; color: #555; font-weight: 400; text-align: left; white-space: nowrap; line-height: 15px; }
th div { display: flex; justify-content: space-between; }
th button { border: 1px solid #999; width: 15px; height: 14px; }
th button svg { width: 13px; height: 12px; }
td { height: 25px; padding: 1px 0 0 2px; overflow: hidden; white-space: nowrap; font-size: 13px; line-height: 20px; }
.ind { background: #f1f1f1; border-right: 1px solid #fff; overflow: visible; padding: 7px 0 0 2px; vertical-align: top; }
.ind .pm { width: 11px; height: 11px; }
.grp td { background: #e5e5e3; color: #555; padding: 0 0 3px 2px; }
.grp .ind { padding-top: 7px; background: #f1f1f1; }
.alt td:not(.ind) { background: #f1f1f1; }
.blue td:not(.ind) { background: #99c7f0; }
.focus { position: relative; overflow: visible; box-shadow: inset 0 0 0 1px #7b4a25; }
input[type=checkbox] { appearance: none; display: block; width: 15px; height: 15px; border: 2px solid #444; background: #fff; margin-bottom: 1px; }
.n { padding-left: 22px; }
.fl { width: 8px; height: 11px; margin: 0 0 4px 6px; }
.k { text-align: center; }
.k a { color: #000; }
.t { padding-left: 2px; }
.d { padding-left: 3px; }
.f i { display: inline-block; width: 8px; height: 10px; margin: 0 0 6px 2px; vertical-align: middle; }
.f { font-size: 0; padding-left: 1px; }
.g { background: #26d07c; } .n1 { background: #10427c; } .n2 { background: #5b8fca; }
.smudge { display: block; width: 158px; height: 14px; background: linear-gradient(90deg, #999 0 28%, #bbb 33%, #999 40%); opacity: .4; filter: blur(6px); }
.part { display: flex; align-items: center; }
.smudge.long { width: 180px; height: 16px; }
.parties { display: flex; align-items: center; height: 23px; padding: 2px 0 0 3px; color: #444; }
.wideband { width: 320px; height: 16px; opacity: .3; }
.pager { display: flex; justify-content: center; align-items: center; gap: 9px; padding-bottom: 5px; }
.pager output { background: #fff; border: 1px solid #e6e6e6; padding: 0 3px; line-height: 17px; }
.pager button { font-size: 10px; }
.legend-cell { overflow: visible; position: relative; }
.legend { position: absolute; z-index: 4; left: -10px; right: 0; top: -1px; height: 50px; padding: 1px 5px; background: #fff; border-top: 2px solid #d0d0d0; color: #555; }
.legend p { display: flex; align-items: center; gap: 13px; height: 20px; font-size: 11px; }
.legend i { width: 8px; height: 10px; }
```
